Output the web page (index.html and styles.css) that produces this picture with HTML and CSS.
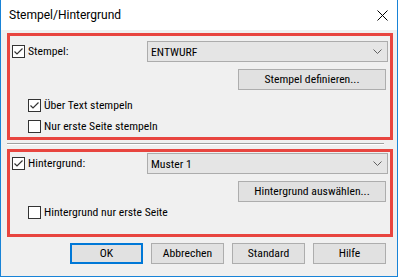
FILE: index.html
```html
<!DOCTYPE html>
<html lang="de">
<head>
<meta charset="utf-8">
<title>Stempel/Hintergrund</title>
<link rel="stylesheet" href="styles.css">
</head>
<body>
<div class="window">
  <div class="titlebar">
    <span class="title">Stempel/Hintergrund</span>
    <svg class="close" width="11" height="11" viewBox="0 0 11 11"><path d="M0.5 0.5 L10.5 10.5 M10.5 0.5 L0.5 10.5" stroke="#000" stroke-width="1" fill="none"/></svg>
  </div>
  <div class="content">
    <section class="group g1">
      <div class="row">
        <div class="check lead"><span class="box"><svg width="11" height="11" viewBox="0 0 11 11"><path d="M1.5 5.5 L4 8 L9.5 2.5" stroke="#333" stroke-width="1.2" fill="none"/></svg></span><span>Stempel:</span></div>
        <div class="combo"><span>ENTWURF</span><svg class="chev" width="9" height="5" viewBox="0 0 9 5"><path d="M0.5 0.5 L4.5 4.5 L8.5 0.5" stroke="#606060" stroke-width="1" fill="none"/></svg></div>
      </div>
      <div class="row end btnrow"><button class="btn wide">Stempel definieren...</button></div>
      <div class="check sub first"><span class="box"><svg width="11" height="11" viewBox="0 0 11 11"><path d="M1.5 5.5 L4 8 L9.5 2.5" stroke="#333" stroke-width="1.2" fill="none"/></svg></span><span>Über Text stempeln</span></div>
      <div class="check sub second"><span class="box"></span><span>Nur erste Seite stempeln</span></div>
    </section>
    <div class="sep"></div>
    <section class="group g2">
      <div class="row">
        <div class="check lead"><span class="box"><svg width="11" height="11" viewBox="0 0 11 11"><path d="M1.5 5.5 L4 8 L9.5 2.5" stroke="#333" stroke-width="1.2" fill="none"/></svg></span><span>Hintergrund:</span></div>
        <div class="combo"><span>Muster 1</span><svg class="chev" width="9" height="5" viewBox="0 0 9 5"><path d="M0.5 0.5 L4.5 4.5 L8.5 0.5" stroke="#606060" stroke-width="1" fill="none"/></svg></div>
      </div>
      <div class="row end btnrow"><button class="btn wide">Hintergrund auswählen...</button></div>
      <div class="check sub g2sub"><span class="box"></span><span>Hintergrund nur erste Seite</span></div>
    </section>
    <div class="actions">
      <button class="btn act default">OK</button>
      <button class="btn act">Abbrechen</button>
      <button class="btn act">Standard</button>
      <button class="btn act">Hilfe</button>
    </div>
  </div>
</div>
</body>
</html>
```
FILE: styles.css
```css
html, body { margin: 0; padding: 0; }
body {
  width: 398px;
  height: 277px;
  overflow: hidden;
  font-family: "Roboto Condensed", "Liberation Sans", Arial, sans-serif;
  font-size: 11.7px;
  color: #000;
}
.window {
  width: 398px;
  height: 277px;
  box-sizing: border-box;
  border: 1px solid #1883d7;
  border-top: none;
  background: #f0f0f0;
  display: flex;
  flex-direction: column;
}
.titlebar {
  height: 30px;
  flex: 0 0 30px;
  background: #fff;
  display: flex;
  align-items: center;
  justify-content: space-between;
  padding: 0 9px 0 8px;
}
.title {
  font-family: Roboto, "Liberation Sans", sans-serif;
  font-size: 12px;
  line-height: 16px;
}
.close { display: block; }
.content {
  padding: 3px 4px 0 6px;
  display: flex;
  flex-direction: column;
}
.group {
  border: 3px solid #e8453f;
  display: flex;
  flex-direction: column;
  padding: 0 2px 0 2px;
}
.g1 { padding-top: 5px; padding-bottom: 4px; }
.g2 { padding-top: 1px; padding-bottom: 15px; }
.row {
  display: flex;
  align-items: center;
  height: 21px;
}
.row.end { justify-content: flex-end; }
.btnrow { margin-top: 7px; padding-right: 2px; }
.check {
  display: flex;
  align-items: center;
  gap: 3px;
  height: 13px;
  line-height: 13px;
  white-space: nowrap;
}
.lead { flex: 0 0 135px; height: 21px; }
.sub { margin-left: 16px; }
.g1 .first { margin-top: 9px; }
.g1 .second { margin-top: 8px; }
.g2sub { margin-top: 4px; }
.box {
  width: 13px;
  height: 13px;
  box-sizing: border-box;
  border: 1px solid #333;
  background: #fff;
  display: flex;
  align-items: center;
  justify-content: center;
  flex: 0 0 13px;
}
.box svg { display: block; }
.combo {
  flex: 1;
  height: 21px;
  box-sizing: border-box;
  border: 1px solid #acacac;
  background: #e5e5e5;
  display: flex;
  align-items: center;
  justify-content: space-between;
  padding: 0 5px 0 3px;
}
.chev { display: block; }
.btn {
  font: inherit;
  color: #000;
  height: 21px;
  box-sizing: border-box;
  border: 1px solid #adadad;
  background: #e1e1e1;
  padding: 0;
  margin: 0;
  line-height: 19px;
}
.wide { width: 148px; }
.sep {
  margin: 3px 9px 0 0;
  height: 0;
  border-top: 1px solid #a0a0a0;
  border-bottom: 1px solid #fff;
}
.g2 { margin-top: 4px; }
.actions {
  display: flex;
  justify-content: flex-end;
  gap: 8px;
  margin-top: 6px;
  padding-right: 7px;
}
.act { width: 73px; }
.default { border: 2px solid #0078d7; line-height: 17px; }
```
